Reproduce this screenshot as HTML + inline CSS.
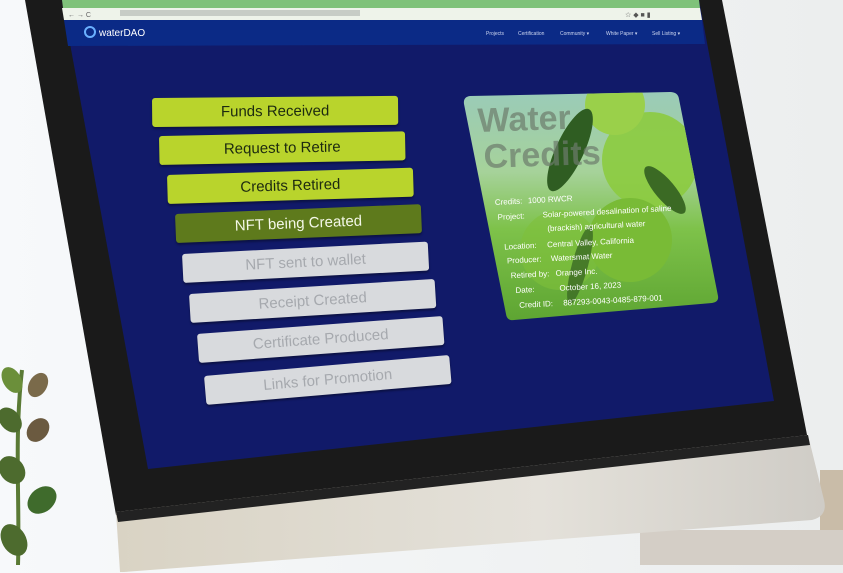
<!DOCTYPE html>
<html><head><meta charset="utf-8"><style>
html,body{margin:0;padding:0;width:843px;height:573px;overflow:hidden;background:#f3f5f6;font-family:"Liberation Sans",sans-serif}
.b{position:absolute;width:246px;height:29px;border-radius:3px;text-align:center;line-height:29px;font-size:15px;transform-origin:0 0;box-shadow:0 2px 2px rgba(0,0,0,.35)}
.g{background:#b9d42c;color:#1d2a10}
.d{background:#5e7a1c;color:#f4f8e8}
.w{background:#d8dadd;color:#a6a9ae}
</style></head><body>
<svg width="843" height="573" style="position:absolute;left:0;top:0">
<defs>
<linearGradient id="bg" x1="0" x2="1"><stop offset="0" stop-color="#f7f9fb"/><stop offset="1" stop-color="#eceeee"/></linearGradient>
<linearGradient id="chin" x1="0" y1="0" x2="1" y2="0"><stop offset="0" stop-color="#d9d3c4"/><stop offset=".6" stop-color="#e4e1da"/><stop offset="1" stop-color="#cfccc6"/></linearGradient>
<linearGradient id="card" x1="0" y1="0" x2="0" y2="1"><stop offset="0" stop-color="#9acbb8"/><stop offset=".35" stop-color="#a6d29a"/><stop offset=".6" stop-color="#7ec24a"/><stop offset="1" stop-color="#5ea532"/></linearGradient>
<clipPath id="cc"><path d="M470 96 L670 92 Q678 92 679 99 L718 296 Q719 302 712 303 L514 320 Q507 321 506 314 L464 104 Q463 97 470 96Z"/></clipPath>
</defs>
<rect width="843" height="573" fill="url(#bg)"/>
<rect x="820" y="470" width="23" height="95" fill="#c9bca8"/>
<rect x="640" y="530" width="203" height="35" fill="#d4cec6"/>
<!-- plant -->
<g fill="#4d6b2e">
<path d="M18 565 C20 500 14 440 22 370" stroke="#5a7a35" stroke-width="4" fill="none"/>
<ellipse cx="12" cy="380" rx="9" ry="14" transform="rotate(-30 12 380)" fill="#6b8f3a"/>
<ellipse cx="38" cy="385" rx="9" ry="13" transform="rotate(30 38 385)" fill="#7a6a4a"/>
<ellipse cx="10" cy="420" rx="10" ry="14" transform="rotate(-40 10 420)"/>
<ellipse cx="38" cy="430" rx="10" ry="13" transform="rotate(40 38 430)" fill="#6b5a40"/>
<ellipse cx="12" cy="470" rx="12" ry="15" transform="rotate(-40 12 470)"/>
<ellipse cx="42" cy="500" rx="12" ry="16" transform="rotate(50 42 500)" fill="#3f6b2c"/>
<ellipse cx="14" cy="540" rx="12" ry="17" transform="rotate(-30 14 540)"/>
</g>
<!-- monitor bezel -->
<polygon points="25,0 722,0 808,440 116,515" fill="#1a1a1a"/>
<path d="M116,512 L808,435 L824,500 Q828,516 812,520 L124,572 L120,572Z" fill="url(#chin)"/>
<polygon points="116,512 808,435 810,445 118,522" fill="#222"/>
<!-- screen -->
<polygon points="62,0 699,0 774,401 148,469" fill="#111a69"/>
<!-- browser bars -->
<polygon points="62,0 699,0 700,8 63,8" fill="#7fc27a"/>
<polygon points="62,8 700,8 702,20 64,20" fill="#eef3ea"/>
<polygon points="64,20 702,20 705,44 68,46" fill="#0b2a86"/>
<rect x="120" y="10" width="240" height="6" fill="#c7ccc6"/>
<text x="68" y="17" font-size="7" fill="#666">← → C</text>
<text x="625" y="17" font-size="7" fill="#555">☆ ◆ ■ ▮</text>
<circle cx="90" cy="32" r="5" fill="none" stroke="#6ab0ff" stroke-width="2"/>
<text x="99" y="36" font-size="10" fill="#fff">waterDAO</text>
<g font-size="5" fill="#cdd6f0"><text x="486" y="35">Projects</text><text x="518" y="35">Certification</text><text x="560" y="35">Community ▾</text><text x="606" y="35">White Paper ▾</text><text x="652" y="35">Sell Listing ▾</text></g>
<!-- card -->
<path d="M470 96 L670 92 Q678 92 679 99 L718 296 Q719 302 712 303 L514 320 Q507 321 506 314 L464 104 Q463 97 470 96Z" fill="url(#card)"/>
<g clip-path="url(#cc)">
<circle cx="560" cy="250" r="40" fill="#7fbf3a" opacity=".6"/>
<circle cx="650" cy="160" r="48" fill="#8ccb3f" opacity=".9"/>
<circle cx="630" cy="240" r="42" fill="#79bb36"/>
<circle cx="615" cy="105" r="30" fill="#9ad04a"/>
<ellipse cx="570" cy="150" rx="14" ry="45" transform="rotate(25 570 150)" fill="#2f5d22"/>
<ellipse cx="665" cy="190" rx="10" ry="30" transform="rotate(-40 665 190)" fill="#3b6a24"/>
<ellipse cx="580" cy="265" rx="8" ry="40" transform="rotate(15 580 265)" fill="#3b6a24" opacity=".8"/>
</g>
<text x="478" y="132" font-size="34" font-weight="bold" fill="#6d7c6c" opacity=".7" transform="rotate(-2 478 132)">Water</text>
<text x="484" y="168" font-size="34" font-weight="bold" fill="#6d7c6c" opacity=".7" transform="rotate(-2 484 168)">Credits</text>
<g font-size="8" fill="#fff" transform="rotate(-3 495 205)">
<text x="495" y="205">Credits:</text><text x="528" y="205">1000 RWCR</text>
<text x="497" y="220">Project:</text><text x="542" y="220">Solar-powered desalination of saline</text>
<text x="546" y="234">(brackish) agricultural water</text>
<text x="502" y="250">Location:</text><text x="545" y="250">Central Valley, California</text>
<text x="504" y="264">Producer:</text><text x="548" y="264">Watersmat Water</text>
<text x="507" y="279">Retired by:</text><text x="552" y="279">Orange Inc.</text>
<text x="511" y="294">Date:</text><text x="555" y="294">October 16, 2023</text>
<text x="514" y="309">Credit ID:</text><text x="558" y="309">887293-0043-0485-879-001</text>
</g>
</svg>
<div class="b g" style="left:152px;top:98px;transform:rotate(-0.5deg)">Funds Received</div>
<div class="b g" style="left:159px;top:136px;transform:rotate(-1.1deg)">Request to Retire</div>
<div class="b g" style="left:167px;top:175px;transform:rotate(-1.7deg)">Credits Retired</div>
<div class="b d" style="left:175px;top:214px;transform:rotate(-2.3deg)">NFT being Created</div>
<div class="b w" style="left:182px;top:254px;transform:rotate(-2.9deg)">NFT sent to wallet</div>
<div class="b w" style="left:189px;top:294px;transform:rotate(-3.5deg)">Receipt Created</div>
<div class="b w" style="left:197px;top:334px;transform:rotate(-4.2deg)">Certificate Produced</div>
<div class="b w" style="left:204px;top:376px;transform:rotate(-4.9deg)">Links for Promotion</div>
</body></html>
